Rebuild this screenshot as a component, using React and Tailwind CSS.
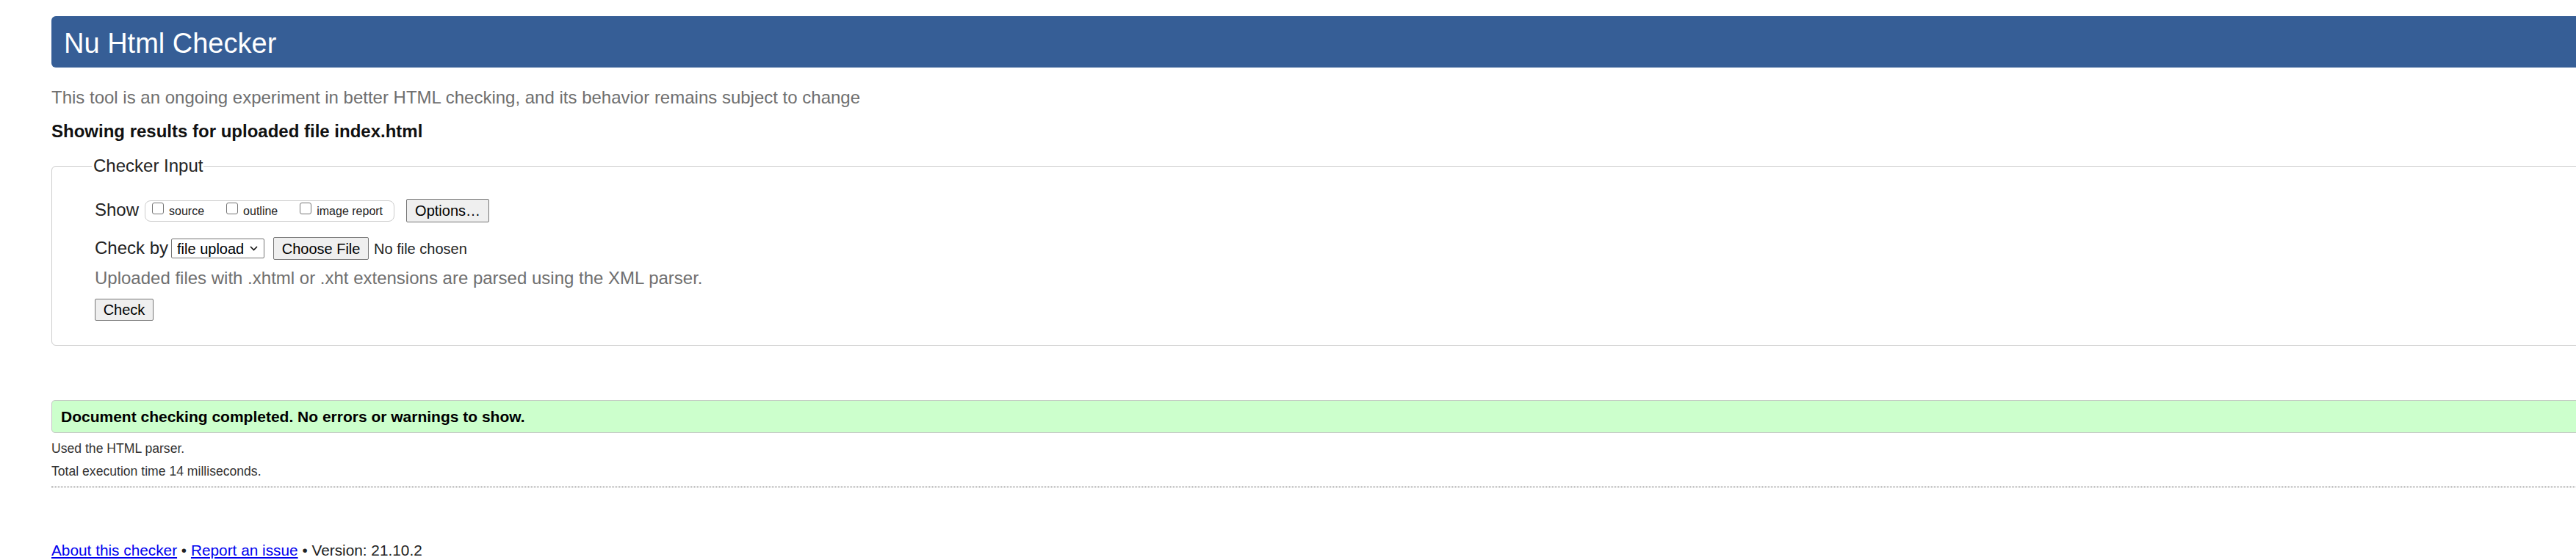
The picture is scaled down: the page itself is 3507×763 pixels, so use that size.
import React, { useState } from 'react';

const CHECKBOXES = [
  { id: 'source', label: 'source' },
  { id: 'outline', label: 'outline', gap: true },
  { id: 'imagereport', label: 'image report', gap: true },
];

const buttonClass =
  'flex items-center justify-center bg-[#efefef] border border-[#767676] rounded-[2px] text-[20px] leading-[24px] text-black';

const App = () => {
  const [shown, setShown] = useState({ source: false, outline: false, imagereport: false });
  const [method, setMethod] = useState('file');

  const toggle = (id) => setShown((prev) => ({ ...prev, [id]: !prev[id] }));

  return (
    <div className="min-h-[763px] overflow-hidden bg-white font-['Liberation_Sans',Arial,sans-serif]">
      <div className="w-[3540px] pl-[70px] pt-[22px]">
        {/* Title bar */}
        <h1 className="h-[70px] rounded-[6px] bg-[#365e96] pl-[17px] pt-[16px] text-[38px] leading-[42px] font-normal text-white">
          Nu Html Checker
        </h1>

        <p className="mt-[27px] text-[24px] leading-[28px] text-[#6f6f6f]">
          This tool is an ongoing experiment in better HTML checking, and its behavior remains subject to change
        </p>

        <p className="mt-[18px] text-[24px] leading-[28px] font-bold text-[#111]">
          Showing results for uploaded file index.html
        </p>

        {/* Checker input form */}
        <fieldset className="mt-[19px] rounded-[6px] border border-[#cccccc] pl-[58px] pb-[33px]">
          <legend className="-ml-[4px] pl-[2px] pr-[1px] text-[24px] leading-[28px] text-[#222]">
            Checker Input
          </legend>

          <div className="mt-[31px] flex h-[32px] items-center">
            <span className="mb-[2px] text-[24px] leading-[24px] text-[#222]">Show</span>
            <div className="ml-[8px] flex h-[29px] w-[340px] items-start rounded-[8px] border border-[#cccccc] pl-[9px]">
              {CHECKBOXES.map((box) => (
                <label
                  key={box.id}
                  className={`flex cursor-pointer items-start ${box.gap ? 'ml-[30px]' : ''}`}
                >
                  <input
                    type="checkbox"
                    checked={shown[box.id]}
                    onChange={() => toggle(box.id)}
                    className="mt-[2px] h-[16px] w-[16px] appearance-none rounded-[3px] border border-[#767676] bg-white checked:bg-[#0075ff]"
                  />
                  <span className="ml-[7px] mt-[4.5px] text-[16px] leading-[20px] text-[#222]">{box.label}</span>
                </label>
              ))}
            </div>
            <button className={`${buttonClass} ml-[16px] h-[32px] w-[113px]`}>Options…</button>
          </div>

          <div className="mt-[20px] flex h-[31px] items-center">
            <span className="mb-[2px] text-[24px] leading-[24px] text-[#222]">Check by</span>
            <div className="relative ml-[4px] h-[27px] w-[127px]">
              <select
                value={method}
                onChange={(e) => setMethod(e.target.value)}
                className="h-full w-full appearance-none rounded-[2px] border border-[#767676] bg-white pl-[7px] text-[20px] leading-[24px] text-black"
              >
                <option value="address">address</option>
                <option value="file">file upload</option>
                <option value="text">text input</option>
              </select>
              <svg
                className="pointer-events-none absolute right-[9px] top-[10px]"
                width="11"
                height="7"
                viewBox="0 0 11 7"
                fill="none"
              >
                <path d="M1 1l4.5 4.5L10 1" stroke="#111" strokeWidth="1.6" />
              </svg>
            </div>
            <button className={`${buttonClass} ml-[12px] h-[31px] w-[130px]`}>Choose File</button>
            <span className="ml-[7px] text-[20px] leading-[24px] text-[#222]">No file chosen</span>
          </div>

          <p className="mt-[11px] text-[24px] leading-[28px] text-[#6f6f6f]">
            Uploaded files with .xhtml or .xht extensions are parsed using the XML parser.
          </p>

          <button className={`${buttonClass} mt-[14px] h-[30px] w-[80px]`}>Check</button>
        </fieldset>

        {/* Result */}
        <div className="mt-[74px] h-[45px] rounded-[5px] border border-[#c4c4c4] bg-[#ccffcc] pl-[12px] pt-[10px]">
          <p className="text-[21px] leading-[24px] font-bold text-black">
            Document checking completed. No errors or warnings to show.
          </p>
        </div>

        <p className="mt-[10px] text-[17.6px] leading-[22px] text-[#333]">Used the HTML parser.</p>
        <p className="mt-[9px] text-[17.6px] leading-[22px] text-[#333]">Total execution time 14 milliseconds.</p>

        <div className="mt-[10px] border-t border-dotted border-[#555]" />

        <p className="mt-[74px] text-[20.8px] leading-[24px] text-[#222]">
          <a href="#about" className="text-[#0000ee] underline">About this checker</a>
          {' • '}
          <a href="#issue" className="text-[#0000ee] underline">Report an issue</a>
          {' • Version: 21.10.2'}
        </p>
      </div>
    </div>
  );
};

export default App;
